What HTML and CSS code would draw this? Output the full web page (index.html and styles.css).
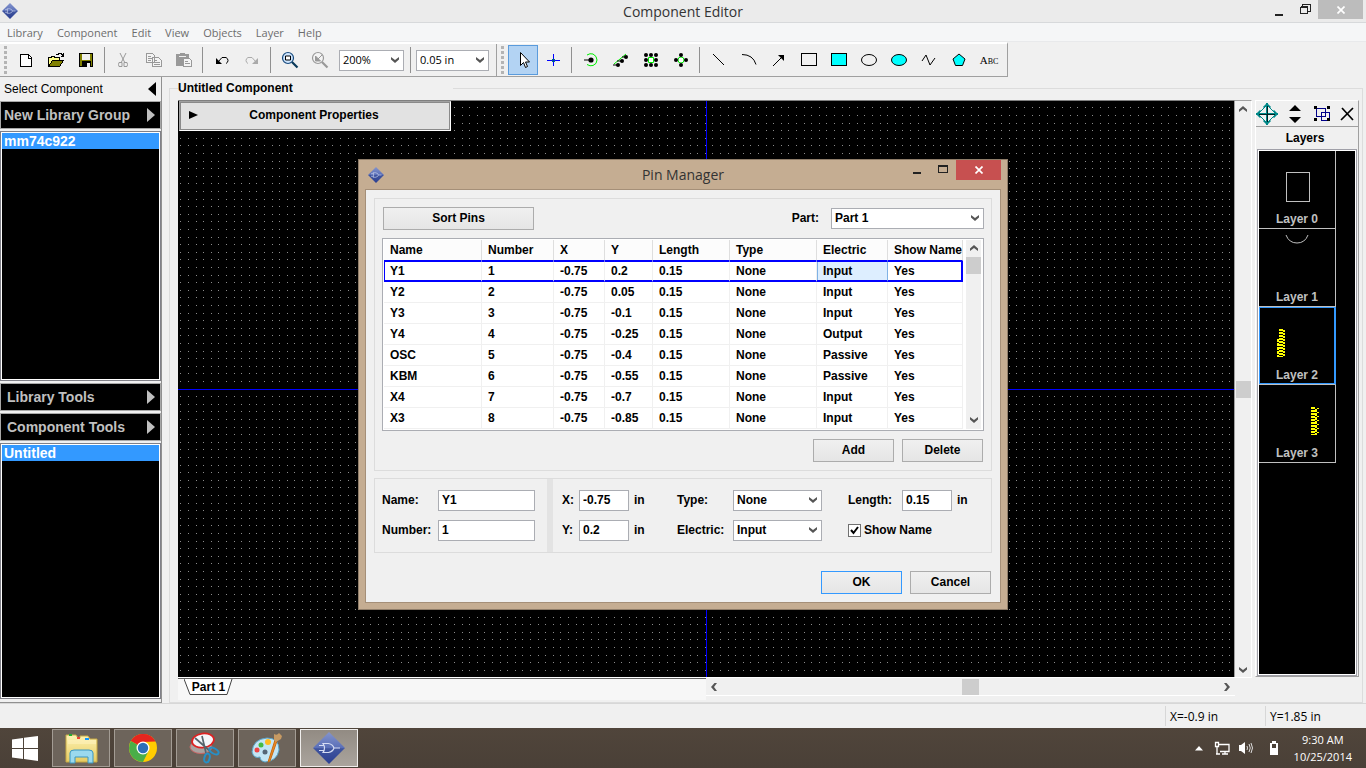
FILE: index.html
```html
<!DOCTYPE html>
<html lang="en">
<head>
<meta charset="utf-8">
<title>Component Editor</title>
<link rel="stylesheet" href="styles.css">
</head>
<body>
<svg class="defs" aria-hidden="true">
  <defs>
    <linearGradient id="gem" x1="0" y1="0" x2="0" y2="1"><stop offset="0" stop-color="#8494cc"/><stop offset=".5" stop-color="#5a6fb8"/><stop offset=".52" stop-color="#40559f"/><stop offset="1" stop-color="#2b3f92"/></linearGradient>
    <linearGradient id="folder" x1="0" y1="0" x2="0" y2="1"><stop offset="0" stop-color="#fdf3b4"/><stop offset="1" stop-color="#e6cb62"/></linearGradient>
    <symbol id="logo" viewBox="0 0 32 32"><path d="M16 0L32 16L16 32L0 16Z" fill="url(#gem)"/><path d="M10 11.500h5.500q4.500 1 5.500 4.500q-1 3.500-5.500 4.500H10q3-4.500 0-9zM6 13.500h5M6 18.500h5M21 16h6" fill="none" stroke="#d5dcf3" stroke-width="1.200"/></symbol>
    <symbol id="up" viewBox="0 0 8 6"><path d="M0 6V3.500L4 0L8 3.500V6L4 3Z" fill="#555"/></symbol>
    <pattern id="dots" width="38" height="38" patternUnits="userSpaceOnUse">
      <path d="M2 6.500h1M10 6.500h1M18 6.500h1M25 6.500h1M33 6.500h1M2 14.500h1M10 14.500h1M18 14.500h1M25 14.500h1M33 14.500h1M2 22.500h1M10 22.500h1M18 22.500h1M25 22.500h1M33 22.500h1M2 29.500h1M10 29.500h1M18 29.500h1M25 29.500h1M33 29.500h1M2 37.500h1M10 37.500h1M18 37.500h1M25 37.500h1M33 37.500h1" stroke="#8c8c8c"/>
    </pattern>
  </defs>
</svg>

<header class="titlebar">
  <svg class="app-icon" width="16" height="16"><use href="#logo"/></svg>
  <h1 class="window-title">Component Editor</h1>
  <div class="window-buttons">
    <button class="win-btn" aria-label="Minimize"><svg width="9" height="12"><path d="M0 10h8v2H0z" fill="#222"/></svg></button>
    <button class="win-btn" aria-label="Restore"><svg width="11" height="11" shape-rendering="crispEdges"><path d="M.5 3.500h7v6h-7zM.5 2.500h7M2.500 2V.500h8v7H8" fill="none" stroke="#222"/></svg></button>
    <button class="win-btn win-close" aria-label="Close"><svg width="8" height="8"><path d="M.5 .5l7 7M7.500 .5l-7 7" stroke="#fff" stroke-width="1.700"/></svg></button>
  </div>
</header>

<nav class="menubar">
  <a href="#">Library</a><a href="#">Component</a><a href="#">Edit</a><a href="#">View</a><a href="#">Objects</a><a href="#">Layer</a><a href="#">Help</a>
</nav>

<div class="toolbar">
  <span class="grip"></span>
  <button class="tool" aria-label="New"><svg width="20" height="20" shape-rendering="crispEdges"><path d="M4.500 4.500h8l3 3v9h-11z" fill="#fff" stroke="#000"/><path d="M12 4v4h4" fill="none" stroke="#000"/></svg></button>
  <button class="tool" aria-label="Open"><svg width="20" height="20" shape-rendering="crispEdges"><path d="M2.500 16.500v-9h3v-1h3v1h5v3h-6z" fill="#ff8" stroke="#000"/><path d="M2.500 16.500l4-6h11l-4 6z" fill="#808000" stroke="#000"/><path d="M10 4.500h2l1-1h2l2 2M17.500 3v4M15 6.500h3" fill="none" stroke="#000"/></svg></button>
  <button class="tool" aria-label="Save"><svg width="20" height="20" shape-rendering="crispEdges"><path d="M3.500 3.500h13v13h-13z" fill="#808000" stroke="#000"/><path d="M6 4h8v6H6z" fill="#f0f0f0"/><path d="M6 11h9v6H6z" fill="#000"/><path d="M11 13h3v4h-3z" fill="#f0f0f0"/></svg></button>
  <span class="sep"></span>
  <button class="tool" aria-label="Cut"><svg width="20" height="20"><path d="M6 3l5 10M12 3L7 13" stroke="#999" fill="none"/><path d="M5 12.500h3v4H5l-.5-2zM10 12.500h3l.5 2-.5 2h-3z" fill="none" stroke="#999"/></svg></button>
  <button class="tool" aria-label="Copy"><svg width="20" height="20" shape-rendering="crispEdges"><path d="M2.500 3.500h6l2 2v7h-8zM8.500 7.500h6l3 3v6h-9z" fill="#f4f4f4" stroke="#999"/><path d="M4 6.500h3M4 8.500h4M4 10.500h3M10 10.500h3M10 12.500h6M10 14.500h6" stroke="#999"/></svg></button>
  <button class="tool" aria-label="Paste"><svg width="20" height="20" shape-rendering="crispEdges"><path d="M2 4h4V3h5v1h4v12H2z" fill="#999"/><path d="M5 6h7" stroke="#eee"/><path d="M9.500 8.500h6l2 2v6h-8z" fill="#f4f4f4" stroke="#999"/><path d="M11 11.500h3M11 13.500h5" stroke="#999"/></svg></button>
  <span class="sep"></span>
  <button class="tool" aria-label="Undo"><svg width="20" height="20"><path d="M6 12l4-4.500h4q2 1 2 3t-2 3" fill="none" stroke="#000"/><path d="M4 8v6h6z"/></svg></button>
  <button class="tool" aria-label="Redo"><svg width="20" height="20"><path d="M14 12l-4-4.500H6q-2 1-2 3t2 3" fill="none" stroke="#aaa"/><path d="M16 8v6h-6z" fill="#aaa"/></svg></button>
  <span class="sep"></span>
  <button class="tool" aria-label="Zoom to fit"><svg width="20" height="20"><circle cx="8" cy="8" r="5.500" fill="#cfe6ff" stroke="#17497c" stroke-width="1.200"/><path d="M5.500 6h5v4h-5z" fill="#fff" stroke="#000"/><path d="M12 12l5.500 5.500" stroke="#0a3a5a" stroke-width="2.200"/></svg></button>
  <button class="tool" aria-label="Previous zoom"><svg width="20" height="20"><circle cx="8" cy="8" r="5.500" fill="#f4f4f4" stroke="#999" stroke-width="1.200"/><path d="M5.500 6v5h5zM8 9l4-4" fill="#999" stroke="#999"/><path d="M12 12l5.500 5.500" stroke="#999" stroke-width="2.200"/></svg></button>
  <select class="combo zoom-combo" aria-label="Zoom"><option>200%</option></select>
  <span class="sep sep-wide"></span>
  <select class="combo grid-combo" aria-label="Grid size"><option>0.05 in</option></select>
  <span class="bar-end"></span>
  <span class="grip"></span>
  <button class="tool tool-on" aria-label="Select"><svg width="20" height="20"><path d="M7.500 2.500v13l3-3 2 5 2-1-2-4.500h4z" fill="#fff" stroke="#000"/></svg></button>
  <button class="tool" aria-label="Origin"><svg width="20" height="20" shape-rendering="crispEdges"><path d="M10.500 4v12M4 10.500h13" stroke="#00f"/><path d="M9.500 9.500h2v2h-2z" fill="none" stroke="#068"/></svg></button>
  <span class="sep"></span>
  <button class="tool" aria-label="Pin"><svg width="20" height="20"><path d="M6 5q3-2 6-1q4 2 4 6q0 4-4 5.500q-3 1-6-1" fill="none" stroke="#0e0"/><path d="M3 10h6" stroke="#000"/><circle cx="10" cy="10" r="2.600"/></svg></button>
  <button class="tool" aria-label="Pin row"><svg width="20" height="20"><path d="M3 14L15 4" stroke="#0e0"/><path d="M2 15h5M6 11h5M11 7h5" stroke="#000"/><circle cx="7" cy="15" r="2"/><circle cx="11" cy="11" r="2"/><circle cx="15" cy="7" r="2"/></svg></button>
  <button class="tool" aria-label="Pin matrix"><svg width="20" height="20"><path d="M7.500 7.500h5v5h-5z" fill="#fff" stroke="#0e0"/><circle cx="5" cy="5" r="2"/><circle cx="10" cy="5" r="2"/><circle cx="15" cy="5" r="2"/><circle cx="5" cy="10" r="2"/><circle cx="15" cy="10" r="2"/><circle cx="5" cy="15" r="2"/><circle cx="10" cy="15" r="2"/><circle cx="15" cy="15" r="2"/></svg></button>
  <button class="tool" aria-label="Pin circle"><svg width="20" height="20"><circle cx="10" cy="10" r="3" fill="#fff" stroke="#0e0"/><circle cx="10" cy="5" r="2"/><circle cx="5" cy="10" r="2"/><circle cx="15" cy="10" r="2"/><circle cx="10" cy="15" r="2"/></svg></button>
  <span class="sep"></span>
  <button class="tool" aria-label="Line"><svg width="20" height="20"><path d="M4 4l11 11" stroke="#000"/></svg></button>
  <button class="tool" aria-label="Arc"><svg width="20" height="20"><path d="M3 4.500q11 0 14 10" fill="none" stroke="#000"/></svg></button>
  <button class="tool" aria-label="Arrow"><svg width="20" height="20"><path d="M4 16L13 7" stroke="#000"/><path d="M9 5h6v6z"/></svg></button>
  <button class="tool" aria-label="Rectangle"><svg width="20" height="20" shape-rendering="crispEdges"><path d="M2.500 3.500h15v12h-15z" fill="none" stroke="#000"/></svg></button>
  <button class="tool" aria-label="Filled rectangle"><svg width="20" height="20" shape-rendering="crispEdges"><path d="M2.500 3.500h15v12h-15z" fill="#0ff" stroke="#000"/></svg></button>
  <button class="tool" aria-label="Ellipse"><svg width="20" height="20"><ellipse cx="10" cy="10" rx="7.500" ry="5.500" fill="none" stroke="#000"/></svg></button>
  <button class="tool" aria-label="Filled ellipse"><svg width="20" height="20"><ellipse cx="10" cy="10" rx="7.500" ry="5.500" fill="#0ff" stroke="#000"/></svg></button>
  <button class="tool" aria-label="Polyline"><svg width="20" height="20"><path d="M3 11l4-6 4 10 5-7" fill="none" stroke="#000"/></svg></button>
  <button class="tool" aria-label="Polygon"><svg width="20" height="20"><path d="M10 4l6 5-2.500 6.500h-7L4 9z" fill="#0ff" stroke="#000"/></svg></button>
  <button class="tool tool-abc" aria-label="Text">Abc</button>
</div>

<main class="workspace">
  <aside class="sidebar">
    <div class="side-title"><span>Select Component</span><svg width="8" height="14"><path d="M8 0v14L0 7z"/></svg></div>
    <button class="side-bar first"><span>New Library Group</span><svg width="8" height="14"><path d="M0 0v14L8 7z" fill="#c0c0c0"/></svg></button>
    <ul class="side-list"><li>mm74c922</li></ul>
    <button class="side-bar"><span>Library Tools</span><svg width="8" height="14"><path d="M0 0v14L8 7z" fill="#c0c0c0"/></svg></button>
    <button class="side-bar"><span>Component Tools</span><svg width="8" height="14"><path d="M0 0v14L8 7z" fill="#c0c0c0"/></svg></button>
    <ul class="side-list"><li>Untitled</li></ul>
  </aside>

  <fieldset class="editor">
    <legend>Untitled Component</legend>
    <div class="editor-body">
      <div class="drawing">
        <div class="canvas-row">
          <div class="canvas">
            <svg class="grid" shape-rendering="crispEdges"><rect width="100%" height="100%" fill="url(#dots)"/><rect x="0" y="50%" width="100%" height="1" fill="#00f"/><rect x="50%" y="0" width="1" height="100%" fill="#00f"/></svg>
            <button class="props"><svg width="9" height="8"><path d="M0 0v8L9 4z"/></svg><span>Component Properties</span></button>
          </div>
          <div class="vscroll"><svg width="8" height="6"><use href="#up"/></svg><i></i><svg class="flip" width="8" height="6"><use href="#up"/></svg></div>
        </div>
        <div class="tab-row">
          <div class="tabs"><button class="tab"><svg width="49" height="17"><path d="M0 0L6 15.500H43L48 0" fill="#fff" stroke="#444"/></svg><span>Part 1</span></button></div>
          <div class="hscroll"><svg class="left" width="8" height="6"><use href="#up"/></svg><i></i><svg class="right" width="8" height="6"><use href="#up"/></svg></div>
        </div>
      </div>
      <aside class="layers">
        <div class="layer-tools">
          <button aria-label="Move"><svg width="22" height="22"><path d="M11 0v22M0 11h22" stroke="#088" stroke-width="2"/><path d="M11 1l3.500 3.500M11 1L7.500 4.500M11 21l3.500-3.500M11 21l-3.500-3.500M1 11l3.500-3.500M1 11l3.500 3.500M21 11l-3.500-3.500M21 11l-3.500 3.500" stroke="#088" stroke-width="1.500"/><path d="M11 2l9 9-9 9-9-9z" fill="none" stroke="#088"/><path d="M11.500 3v16M3 11.500h16" stroke="#022"/></svg></button>
          <button aria-label="Reorder"><svg width="22" height="22"><path d="M11 2l6 6H5zM11 20l6-6H5z"/></svg></button>
          <button aria-label="Group"><svg width="22" height="22" shape-rendering="crispEdges"><path d="M5.500 5.500h9v8h-9zM10.500 9.500h8v8h-8z" fill="#f0f0f0" stroke="#008"/><path d="M3 3h3v3H3zM16 3h3v3h-3zM3 15h3v3H3zM16 15h3v3h-3z"/></svg></button>
          <button aria-label="Delete layer"><svg width="16" height="22"><path d="M3 5l11 12M14 5L2 17" stroke="#000" stroke-width="1.700"/></svg></button>
        </div>
        <h2>Layers</h2>
        <div class="layer-box">
          <button class="layer"><svg width="76" height="76" shape-rendering="crispEdges"><path d="M27.500 21.500h23v29h-23z" fill="none" stroke="#c0c0c0"/></svg><span>Layer 0</span></button>
          <button class="layer"><svg width="76" height="76"><path d="M27 6q3 8 11 8t11-8" fill="none" stroke="#c0c0c0"/></svg><span>Layer 1</span></button>
          <button class="layer layer-on"><svg width="76" height="76" shape-rendering="crispEdges"><path d="M22 22v28" stroke="#ff0" stroke-width="4" stroke-dasharray="2 1"/><path d="M19 32v18" stroke="#ff0" stroke-width="2" stroke-dasharray="3 1"/><path d="M25 23v27" stroke="#ff0" stroke-width="2" stroke-dasharray="2 1"/></svg><span>Layer 2</span></button>
          <button class="layer"><svg width="76" height="76" shape-rendering="crispEdges"><path d="M54 22v28" stroke="#ff0" stroke-width="4" stroke-dasharray="2 1"/><path d="M57 24v26" stroke="#ff0" stroke-width="2" stroke-dasharray="3 1"/><path d="M59 23v25" stroke="#ff0" stroke-width="2" stroke-dasharray="1 3"/></svg><span>Layer 3</span></button>
        </div>
      </aside>
    </div>
  </fieldset>
</main>

<footer class="status"><span>X=-0.9 in</span><span>Y=1.85 in</span></footer>

<div class="taskbar">
  <button class="start" aria-label="Start"><svg width="26" height="25"><path d="M0 3.500L11 2v10H0zM12 1.800L26 0v12H12zM0 13h11v10L0 21.500zM12 13h14v12L12 23z" fill="#fff"/></svg></button>
  <button class="task" aria-label="File Explorer"><svg width="34" height="32"><path d="M2 9V3h10l2 3h2V4h8l2 3h7v23H2z" fill="url(#folder)" stroke="#c8a945"/><path d="M4 9h28M4 11h28" stroke="#fff3c0"/><path d="M5 2h3v2H5z" fill="#2a3"/><path d="M13 5h3v2h-3z" fill="#e43"/><path d="M21 6h4v2h-4z" fill="#19f"/><path d="M6 31V21q0-3 4-3h15q4 0 4 3v10h-5v-6H11v6z" fill="#9bd9ee" stroke="#3a96c0"/></svg></button>
  <button class="task" aria-label="Chrome"><svg width="30" height="30"><circle cx="15" cy="15" r="14" fill="#fc0"/><path d="M15 15L2.900 8A14 14 0 0 1 27.100 8L15 9z" fill="#e5261f"/><path d="M2.900 8A14 14 0 0 0 15 29L20.500 18 15 15z" fill="#4aae48"/><path d="M2.900 8L15 8.500H27.500A14 14 0 0 0 2.900 8z" fill="#e5261f"/><circle cx="15" cy="15" r="6.500" fill="#fff"/><circle cx="15" cy="15" r="5.200" fill="#2d6fb8"/></svg></button>
  <button class="task" aria-label="Snipping Tool"><svg width="34" height="32"><ellipse cx="13" cy="15" rx="11" ry="6.500" fill="#a9a3a0" stroke="#c66"/><ellipse cx="15" cy="8.500" rx="11" ry="7" transform="rotate(-8 15 8.500)" fill="#f4f6fa" stroke="#d22" stroke-width="1.700"/><path d="M7 6l15 13M14 4l4 17" stroke="#56646c" stroke-width="1.700"/><ellipse cx="26" cy="19" rx="5" ry="2.600" transform="rotate(30 26 19)" fill="none" stroke="#2590c8" stroke-width="2"/><ellipse cx="19" cy="26" rx="2.600" ry="4.500" transform="rotate(15 19 26)" fill="none" stroke="#2590c8" stroke-width="2"/></svg></button>
  <button class="task" aria-label="Paint"><svg width="36" height="32"><path d="M3 20Q4 7 18 6q12 0 12 12q-2 11-14 12q-5-1-5-5q-6 2-8-5z" fill="#c3e5f5" stroke="#5aa5c8"/><circle cx="8" cy="18" r="2.500" fill="#e44"/><circle cx="12" cy="13" r="2.500" fill="#4b4"/><circle cx="19" cy="10" r="3" fill="#fb2"/><circle cx="16" cy="20" r="2.500" fill="#567"/><path d="M28 9l-7 20-2 1 1-3L26 8z" fill="#f08a24" stroke="#c56a12"/><path d="M25 2q3 2 5-1l3 3-1 3-5 3-2-2z" fill="#c79a63"/></svg></button>
  <button class="task task-on" aria-label="Component Editor"><svg width="32" height="32"><use href="#logo"/></svg></button>
  <div class="tray">
    <svg width="8" height="5"><path d="M0 4.500L4 0l4 4.500z" fill="#fff"/></svg>
    <svg class="net" width="16" height="14"><path d="M5 3.500h10v7H6M8 13h6M11 11v2M1.500 1.500h3v4h-3zM3 6v7M2 13h4" fill="none" stroke="#fff" stroke-width="1.300"/></svg>
    <svg class="vol" width="16" height="14"><path d="M1 4h2l4-3v12l-4-3H1z" fill="#fff"/><path d="M9 5q1 2 0 4M11 3q2.500 4 0 8M13 2q3 5 0 10" fill="none" stroke="#ddd"/></svg>
    <svg class="bat" width="10" height="16" shape-rendering="crispEdges"><path d="M1 3h2V1h4v2h2v12H1z" fill="#fff"/><path d="M3 4h4v4H3z" fill="#4a4037"/></svg>
    <time class="clock"><span>9:30 AM</span><span>10/25/2014</span></time>
  </div>
</div>

<section class="dialog" role="dialog" aria-labelledby="dlg-title">
  <header class="dlg-head">
    <svg class="app-icon" width="16" height="16"><use href="#logo"/></svg>
    <h2 class="window-title" id="dlg-title">Pin Manager</h2>
    <div class="window-buttons">
      <button class="win-btn" aria-label="Minimize"><svg width="9" height="10"><path d="M0 8h8v2H0z" fill="#222"/></svg></button>
      <button class="win-btn" aria-label="Maximize"><svg width="10" height="9" shape-rendering="crispEdges"><path d="M.5 .5h9v7h-9zM0 1.500h10" fill="none" stroke="#222"/></svg></button>
      <button class="win-btn win-close" aria-label="Close"><svg width="8" height="8"><path d="M.5 .5l7 7M7.500 .5l-7 7" stroke="#fff" stroke-width="1.700"/></svg></button>
    </div>
  </header>
  <div class="dlg-body">
    <div class="box list-box">
      <div class="list-head">
        <button class="btn btn-wide">Sort Pins</button>
        <label for="part">Part:</label>
        <select class="field part" id="part"><option>Part 1</option></select>
      </div>
      <div class="table-box">
        <table>
          <colgroup><col class="c1"><col class="c2"><col class="c3"><col class="c4"><col class="c5"><col class="c6"><col class="c7"><col class="c8"></colgroup>
          <thead><tr><th>Name</th><th>Number</th><th>X</th><th>Y</th><th>Length</th><th>Type</th><th>Electric</th><th>Show Name</th></tr></thead>
          <tbody>
            <tr class="row-on"><td>Y1</td><td>1</td><td>-0.75</td><td>0.2</td><td>0.15</td><td>None</td><td class="cell-on">Input</td><td>Yes</td></tr>
            <tr><td>Y2</td><td>2</td><td>-0.75</td><td>0.05</td><td>0.15</td><td>None</td><td>Input</td><td>Yes</td></tr>
            <tr><td>Y3</td><td>3</td><td>-0.75</td><td>-0.1</td><td>0.15</td><td>None</td><td>Input</td><td>Yes</td></tr>
            <tr><td>Y4</td><td>4</td><td>-0.75</td><td>-0.25</td><td>0.15</td><td>None</td><td>Output</td><td>Yes</td></tr>
            <tr><td>OSC</td><td>5</td><td>-0.75</td><td>-0.4</td><td>0.15</td><td>None</td><td>Passive</td><td>Yes</td></tr>
            <tr><td>KBM</td><td>6</td><td>-0.75</td><td>-0.55</td><td>0.15</td><td>None</td><td>Passive</td><td>Yes</td></tr>
            <tr><td>X4</td><td>7</td><td>-0.75</td><td>-0.7</td><td>0.15</td><td>None</td><td>Input</td><td>Yes</td></tr>
            <tr><td>X3</td><td>8</td><td>-0.75</td><td>-0.85</td><td>0.15</td><td>None</td><td>Input</td><td>Yes</td></tr>
          </tbody>
        </table>
        <div class="vscroll table-scroll"><svg width="8" height="6"><use href="#up"/></svg><i></i><svg class="flip" width="8" height="6"><use href="#up"/></svg></div>
      </div>
      <div class="actions"><button class="btn">Add</button><button class="btn">Delete</button></div>
    </div>
    <div class="box form-box">
      <div class="form-left">
        <label for="pname">Name:</label><input class="field" id="pname" value="Y1">
        <label for="pnum">Number:</label><input class="field" id="pnum" value="1">
      </div>
      <div class="form-right">
        <label for="px">X:</label><input class="field" id="px" value="-0.75"><span class="unit">in</span>
        <label for="ptype">Type:</label><select class="field" id="ptype"><option>None</option></select>
        <label for="plen">Length:</label><input class="field" id="plen" value="0.15"><span class="unit">in</span>
        <label for="py">Y:</label><input class="field" id="py" value="0.2"><span class="unit">in</span>
        <label for="pel">Electric:</label><select class="field" id="pel"><option>Input</option></select>
        <label class="check"><input type="checkbox" checked>Show Name</label>
      </div>
    </div>
    <div class="actions confirm"><button class="btn btn-default">OK</button><button class="btn">Cancel</button></div>
  </div>
</section>
</body>
</html>
```
FILE: styles.css
```css
* { box-sizing: border-box; }

body {
  margin: 0;
  height: 100vh;
  display: flex;
  flex-direction: column;
  overflow: hidden;
  background: #f0f0f0;
  color: #000;
  font: bold 12px/16px "Liberation Sans", Arial, sans-serif;
}

button { font: inherit; color: inherit; padding: 0; border: 0; background: none; }
h1, h2, ul { margin: 0; padding: 0; font-size: inherit; list-style: none; }
svg { display: block; flex: none; }
.defs { position: absolute; width: 0; height: 0; }

/* Window frame */
.titlebar {
  display: grid;
  grid-template-columns: 1fr auto 1fr;
  height: 23px;
  background: #ebebeb;
  border-bottom: 1px solid #d7d9db;
}
.app-icon { margin: 3px 0 0 2px; }
.window-title {
  font: 14px/23px "Open Sans", "Noto Sans", sans-serif;
  color: #333;
}
.window-buttons { display: flex; justify-content: flex-end; }
.win-btn { width: 26px; height: 19px; display: flex; justify-content: center; align-items: center; }
.win-close { width: 45px; background: #bcbcbc; margin-right: 3px; }

.menubar {
  display: flex;
  gap: 14px;
  padding-left: 7px;
  height: 19px;
  background: #f5f6f7;
  border-bottom: 1px solid #e8e9eb;
}
.menubar a {
  font: 11px/20px "Open Sans", "Noto Sans", sans-serif;
  color: #6d6d6d;
  text-decoration: none;
}

/* Toolbar */
.toolbar {
  display: flex;
  align-items: center;
  align-self: flex-start;
  height: 35px;
  padding-right: 3px;
  border-top: 2px solid #fff;
  border-right: 1px solid #a0a0a0;
  border-bottom: 1px solid #a0a0a0;
}
.grip {
  width: 3px;
  height: 28px;
  margin: 0 4px;
  background: repeating-linear-gradient(#b4b4b4 0 3px, #f0f0f0 3px 5px);
}
.tool { width: 30px; height: 30px; display: flex; justify-content: center; align-items: center; }
.tool-on { background: #b3d3f3; border: 1px solid #5a9bdc; }
.tool-abc { font: 11px/16px "Liberation Serif", serif; font-variant: small-caps; }
.sep { width: 1px; height: 26px; margin: 0 4px 0 3px; background: #909090; }
.sep-wide { margin: 0 5px 0 6px; }
.bar-end { width: 1px; height: 32px; margin-left: 7px; background: #a0a0a0; }

.combo, select.field {
  appearance: none;
  border: 1px solid #abadb3;
  border-radius: 0;
  background: #fff url("data:image/svg+xml,%3Csvg xmlns='http://www.w3.org/2000/svg' width='8' height='6'%3E%3Cpath d='M0 0v2.500L4 6l4-3.500V0L4 3z' fill='%23555'/%3E%3C/svg%3E") no-repeat right 4px center;
}
.combo { height: 21px; padding: 0 3px; font: 11px/16px "Open Sans", "Noto Sans", sans-serif; color: #000; }
.zoom-combo { width: 65px; margin-left: 4px; }
.grid-combo { width: 73px; }

/* Workspace */
.workspace { flex: 1; display: flex; min-height: 0; }

.sidebar {
  width: 162px;
  flex: none;
  display: flex;
  flex-direction: column;
  gap: 2px;
  padding-bottom: 3px;
  border-right: 1px solid #909090;
  border-bottom: 1px solid #909090;
}
.side-title {
  display: flex;
  justify-content: space-between;
  align-items: center;
  height: 22px;
  padding: 2px 5px 0 4px;
  font-weight: normal;
}
.side-bar {
  display: flex;
  justify-content: space-between;
  align-items: center;
  height: 28px;
  padding: 0 5px 0 6px;
  background: #000;
  border: 1px solid #a8a8a8;
  color: #c0c0c0;
  font-size: 14px;
}
.side-bar.first { padding-left: 3px; }
.side-list {
  flex: 250 1 0;
  background: #000;
  border: 1px solid #808088;
  outline: 1px solid #fff;
  outline-offset: -2px;
  padding: 1px;
  color: #fff;
  font-size: 14px;
}
.side-list ~ .side-list { flex-grow: 256; }
.side-list li { padding: 0 2px; background: #3399ff; }

.editor {
  flex: 1;
  display: flex;
  min-width: 0;
  margin: 1px 3px 0 7px;
  padding: 2px 3px 2px 8px;
  border: 1px solid #dcdcdc;
}
.editor legend { width: 275px; padding: 0; line-height: 20px; }
.editor-body { flex: 1; display: flex; gap: 3px; min-width: 0; }
.drawing { flex: 1; display: flex; flex-direction: column; min-width: 0; }
.canvas-row { flex: 1; display: flex; min-height: 0; }
.canvas {
  flex: 1;
  position: relative;
  min-width: 0;
  background: #000;
  border-top: 1px solid #808080;
  border-right: 1px solid #a0a0a0;
}
.grid { position: absolute; width: 100%; height: 100%; }
.props {
  position: absolute;
  left: 1px;
  top: 0;
  width: 272px;
  height: 30px;
  display: flex;
  align-items: center;
  padding: 0 20px 2px 9px;
  background: #e2e2e2;
  border: 1px solid #fff;
  border-top-color: #a0a0a0;
  border-left-color: #a0a0a0;
  box-shadow: inset 0 0 0 1px #8a8a8a;
}
.props span { flex: 1; text-align: center; }

.vscroll {
  width: 17px;
  flex: none;
  display: flex;
  flex-direction: column;
  justify-content: space-between;
  align-items: center;
  padding: 5px 0 4px;
  background: #f0f0f0;
  border-top: 1px solid #a0a0a0;
  border-right: 1px solid #fff;
}
.vscroll i { width: 15px; height: 17px; background: #cdcdcd; }
.flip { transform: rotate(180deg); }
.left { transform: rotate(-90deg); }
.right { transform: rotate(90deg); }

.tab-row { height: 23px; display: flex; padding-right: 17px; border-top: 1px solid #fff; }
.tabs {
  flex: 1;
  padding-left: 6px;
  background: #f7f7f7;
  border-top: 1px solid #606060;
}
.tab { position: relative; width: 49px; height: 17px; }
.tab span { position: absolute; inset: 0; }
.hscroll {
  flex: 1;
  display: flex;
  justify-content: space-between;
  align-items: center;
  padding: 0 4px;
  height: 18px;
  border-bottom: 1px solid #fff;
}
.hscroll i { width: 17px; height: 16px; background: #cdcdcd; }

.layers {
  width: 104px;
  flex: none;
  display: flex;
  flex-direction: column;
  margin-bottom: 23px;
  border-top: 1px solid #fff;
  border-left: 1px solid #fff;
  border-right: 1px solid #a0a0a0;
  border-bottom: 1px solid #a0a0a0;
}
.layer-tools {
  display: flex;
  justify-content: space-between;
  height: 26px;
  padding-right: 3px;
  border-bottom: 1px solid #a0a0a0;
}
.layers h2 { line-height: 20px; text-align: center; margin: 1px 4px 1px 0; }
.layer-box {
  flex: 1;
  margin: 0 1px;
  padding: 1px 20px 0 1px;
  background: #000;
  border: 1px solid #a0a0a8;
  outline: 1px solid #fff;
  outline-offset: -2px;
}
.layer {
  position: relative;
  display: block;
  width: 100%;
  height: 78px;
  color: #c0c0c0;
  border-right: 1px solid #c0c0c0;
  border-bottom: 1px solid #c0c0c0;
}
.layer svg { margin-top: -1px; }
.layer span { position: absolute; left: 0; right: 0; bottom: 1px; text-align: center; }
.layer-on { border-right-color: #3399ff; box-shadow: inset 0 0 0 1px #3399ff; }

.status {
  display: flex;
  justify-content: flex-end;
  height: 25px;
  padding-right: 1px;
  border-top: 1px solid #d7d7d7;
  font: 12px/24px "Open Sans", "Noto Sans", sans-serif;
}
.status span { width: 100px; padding-left: 4px; margin: 2px 0; line-height: 22px; border-left: 1px solid #d7d7d7; }

/* Taskbar */
.taskbar {
  display: flex;
  align-items: center;
  gap: 4px;
  height: 40px;
  background: linear-gradient(#50453b, #4a4037);
}
.start { width: 48px; padding-left: 12px; }
.task {
  width: 58px;
  height: 38px;
  display: flex;
  align-items: center;
  justify-content: center;
  background: #6d645b;
  border: 1px solid #a39c94;
}
.task-on { background: linear-gradient(#928b83, #aaa49d); border-color: #f0eeec; }
.tray { display: flex; align-items: center; gap: 11px; margin-left: auto; padding-right: 14px; color: #fff; }
.vol { margin-left: -3px; }
.bat { margin: 0 4px; }
.clock { display: flex; flex-direction: column; align-items: center; font: 11px/17px "Open Sans", "Noto Sans", sans-serif; }

/* Pin Manager dialog */
.dialog {
  position: fixed;
  inset: 0;
  margin: auto;
  width: 650px;
  height: fit-content;
  padding: 0 6px 6px;
  background: #c5ad92;
  border: 1px solid #8f7d69;
}
.dlg-head { display: grid; grid-template-columns: 1fr auto 1fr; height: 29px; }
.dlg-head .app-icon { margin: 7px 0 0 3px; }
.dlg-head .window-title { line-height: 29px; }
.dlg-head .win-close { margin-right: 0; background: #c75050; height: 20px; }
.dlg-body {
  display: flex;
  flex-direction: column;
  gap: 7px;
  padding: 8px;
  background: #f0f0f0;
  border: 1px solid #a58f78;
}
.box { border: 1px solid #dcdcdc; }
.list-box { display: flex; flex-direction: column; gap: 8px; padding: 8px 7px; }
.list-head { display: flex; align-items: center; gap: 12px; padding-left: 1px; }
.list-head label { margin-left: auto; }
.btn {
  width: 81px;
  height: 23px;
  background: linear-gradient(#f0f0f0, #e5e5e5);
  border: 1px solid #acacac;
}
.btn-wide { width: 151px; }
.btn-default { border-color: #3399ff; }
.field {
  width: 100%;
  height: 21px;
  padding: 0 3px;
  border: 1px solid #abadb3;
  background-color: #fff;
  color: #000;
  font: inherit;
}
select.part { width: 153px; }

.table-box {
  display: flex;
  justify-content: space-between;
  padding: 1px;
  background: #fff;
  border: 1px solid #abadb3;
}
table { width: 579px; table-layout: fixed; border-collapse: separate; border-spacing: 0; }
.c1 { width: 98px; }
.c2 { width: 72px; }
.c3 { width: 51px; }
.c4 { width: 48px; }
.c5 { width: 77px; }
.c6 { width: 87px; }
.c7 { width: 71px; }
.c8 { width: 75px; }
th, td {
  height: 21px;
  padding: 0 0 0 6px;
  text-align: left;
  white-space: nowrap;
  border-right: 1px solid #f0f0f0;
  border-bottom: 1px solid #f0f0f0;
}
th { background: #fcfcfc; border-right-color: #dedede; border-bottom-color: #00f; }
.row-on td { border-bottom: 2px solid #00f; border-top: 1px solid #00f; }
.row-on td:first-child { border-left: 1px solid #00f; padding-left: 5px; }
.row-on td:last-child { border-right: 2px solid #00f; }
.row-on .cell-on { background: #def; border-right-color: #7fb2e5; box-shadow: inset 1px 0 #7fb2e5; }
.table-scroll { border: 0; width: 15px; margin-right: 1px; justify-content: flex-start; gap: 6px; padding-bottom: 6px; }
.table-scroll .flip { margin-top: auto; }

.actions { display: flex; justify-content: flex-end; gap: 8px; padding-right: 1px; }
.confirm { margin-top: 11px; }

.form-box { display: flex; height: 75px; }
.form-left {
  display: grid;
  grid-template-columns: 56px 97px;
  gap: 9px 0;
  align-content: center;
  align-items: center;
  padding: 0 12px 0 7px;
}
.form-right {
  flex: 1;
  display: grid;
  grid-template-columns: 17px 50px 48px 56px 115px 54px 50px 1fr;
  gap: 9px 0;
  align-content: center;
  align-items: center;
  padding-left: 9px;
  border-left: 6px solid #e3e3e3;
}
.form-right select { width: 89px; }
.unit { padding-left: 5px; }
.check { grid-column: span 3; display: flex; align-items: center; gap: 3px; }
.check input {
  appearance: none;
  width: 13px;
  height: 13px;
  margin: 0;
  border: 1px solid #707070;
  background: #fff url("data:image/svg+xml,%3Csvg xmlns='http://www.w3.org/2000/svg' width='9' height='9'%3E%3Cpath d='M1 4l2.500 3L8 1' fill='none' stroke='%23000' stroke-width='2'/%3E%3C/svg%3E") no-repeat center;
}
```
